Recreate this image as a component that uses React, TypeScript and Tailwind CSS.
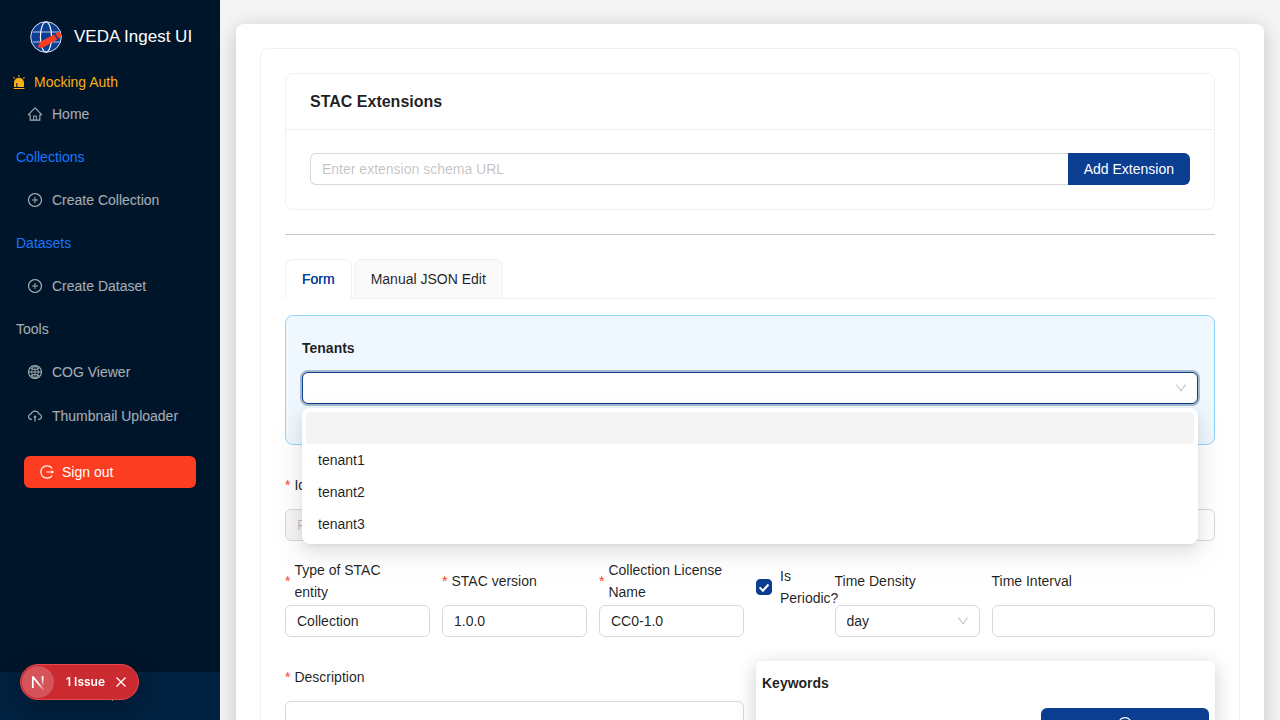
import type { ReactNode } from 'react';
import type { IconType } from 'react-icons';
import {
  AiFillAlert,
  AiOutlineCloudUpload,
  AiOutlineDown,
  AiOutlineGlobal,
  AiOutlineHome,
  AiOutlineLeft,
  AiOutlineLogout,
  AiOutlinePlusCircle,
} from 'react-icons/ai';

const inputClass =
  'block h-8 w-full min-w-0 rounded-md border border-[#d9d9d9] bg-white px-[11px] text-sm text-black/88 outline-none placeholder:text-black/25 disabled:bg-[#f5f5f5]';

// Trims the empty margin that the icon set leaves round each glyph.
function Icon({ as: Glyph, className = 'size-3.5 shrink-0' }: { as: IconType; className?: string }) {
  return <Glyph viewBox="64 64 896 896" className={className} aria-hidden="true" />;
}

function SelectArrow() {
  return <Icon as={AiOutlineDown} className="pointer-events-none absolute top-2.5 right-[11px] size-3 text-black/25" />;
}

function Logo() {
  return (
    <svg className="size-8 shrink-0" viewBox="0 0 32 32" fill="none" aria-hidden="true">
      <circle cx="16" cy="16" r="15.3" fill="#0b3d91" />
      <g stroke="#b9c8e2" strokeWidth="1.2">
        <path d="M2.5 11h27M2.5 21h27" />
        <ellipse cx="16" cy="16" rx="5.6" ry="15" stroke="#fff" />
      </g>
      <circle cx="16" cy="16" r="15.3" stroke="#dde5f2" strokeWidth="1" />
      <g fill="#fc3d21">
        <path d="M8 25.2 10.4 20.8 24.2 13.2 27.2 18.4 13.2 26.4 8.6 26.8Z" />
        <path d="M25.4 12.4 29 10.8 29.9 11.2 31.6 14.6 31.3 15.6 28.4 17.6Z" />
      </g>
    </svg>
  );
}

function MenuLink({ icon, children }: { icon: IconType; children: ReactNode }) {
  return (
    <li className="mx-1 mb-1">
      <a href="#" className="flex h-10 items-center gap-2.5 rounded-lg px-6 text-white/65">
        <Icon as={icon} />
        {children}
      </a>
    </li>
  );
}

function MenuGroup({ title, blue, children }: { title: string; blue?: boolean; children: ReactNode }) {
  return (
    <li>
      <div className={`mb-1 px-4 py-2 leading-[22px] ${blue ? 'text-[#1677ff]' : 'text-white/65'}`}>{title}</div>
      <ul>{children}</ul>
    </li>
  );
}

function Sidebar() {
  return (
    <aside className="flex w-[220px] shrink-0 flex-col bg-[#001529]">
      <div className="flex items-center gap-3 pt-[21px] pl-[30px] text-[17px] leading-6 whitespace-nowrap text-white">
        <Logo />
        <span>VEDA Ingest UI</span>
      </div>
      <div className="mt-[18px] flex items-center gap-2 px-3 leading-[22px] text-[#faad14]">
        <Icon as={AiFillAlert} />
        Mocking Auth
      </div>
      <nav aria-label="Main">
        <ul className="mt-px">
          <MenuLink icon={AiOutlineHome}>Home</MenuLink>
          <MenuGroup title="Collections" blue>
            <MenuLink icon={AiOutlinePlusCircle}>Create Collection</MenuLink>
          </MenuGroup>
          <MenuGroup title="Datasets" blue>
            <MenuLink icon={AiOutlinePlusCircle}>Create Dataset</MenuLink>
          </MenuGroup>
          <MenuGroup title="Tools">
            <MenuLink icon={AiOutlineGlobal}>COG Viewer</MenuLink>
            <MenuLink icon={AiOutlineCloudUpload}>Thumbnail Uploader</MenuLink>
          </MenuGroup>
        </ul>
      </nav>
      <div className="px-6 pt-4">
        <button type="button" className="flex h-8 w-full items-center gap-2 rounded-md bg-[#fc3d21] px-4 text-white">
          <Icon as={AiOutlineLogout} />
          Sign out
        </button>
      </div>
      <button
        type="button"
        aria-label="Collapse sidebar"
        className="mt-auto flex h-12 items-center justify-center bg-[#002140] text-white"
      >
        <Icon as={AiOutlineLeft} className="size-3" />
      </button>
    </aside>
  );
}

function IssueBadge() {
  return (
    <div className="fixed bottom-5 left-5 flex h-9 items-center rounded-full border border-[#e5484d] bg-[#ca2a30] px-px font-['Inter',sans-serif] text-xs font-semibold text-white shadow-[0_8px_24px_rgba(0,0,0,0.25)]">
      <button type="button" aria-label="Open developer tools" className="size-8 rounded-full bg-white/20">
        <svg viewBox="0 0 32 32" fill="none" className="size-8" strokeWidth="1.7">
          <defs>
            <linearGradient id="stem" x1="0" y1="10" x2="0" y2="20" gradientUnits="userSpaceOnUse">
              <stop offset="0.3" stopColor="#fff" />
              <stop offset="1" stopColor="#fff" stopOpacity="0" />
            </linearGradient>
            <linearGradient id="diagonal" x1="17" y1="17" x2="22" y2="24" gradientUnits="userSpaceOnUse">
              <stop stopColor="#fff" />
              <stop offset="1" stopColor="#fff" stopOpacity="0.1" />
            </linearGradient>
          </defs>
          <path d="M10.8 22V10.6L21.6 24" stroke="url(#diagonal)" strokeLinejoin="bevel" />
          <path d="M20.6 10v10" stroke="url(#stem)" />
        </svg>
      </button>
      <button type="button" className="pr-2 pl-3">
        1 Issue
      </button>
      <button type="button" aria-label="Dismiss" className="mr-2 flex size-4 items-center justify-center">
        <svg viewBox="0 0 14 14" className="size-3.5" stroke="#fff" strokeWidth="1.3">
          <path d="m2.5 2.5 9 9m0-9-9 9" />
        </svg>
      </button>
    </div>
  );
}

function Field({
  id,
  label,
  required,
  span,
  children,
}: {
  id: string;
  label: string;
  required?: boolean;
  span: string;
  children: ReactNode;
}) {
  return (
    <div className={span}>
      <label htmlFor={id} className="mb-2 flex h-8 items-center gap-1 pr-3.5 leading-[22px]">
        {required && <span className="text-[#fc3d21]">*</span>}
        <span>{label}</span>
      </label>
      {children}
    </div>
  );
}

function Extensions() {
  return (
    <section className="rounded-lg border border-[#f0f0f0]">
      <h2 className="-mb-px flex h-14 items-center border-b border-[#f0f0f0] px-6 text-base font-bold">
        STAC Extensions
      </h2>
      <div className="flex p-6">
        <input
          aria-label="Extension schema URL"
          placeholder="Enter extension schema URL"
          className="h-8 min-w-0 flex-1 rounded-l-md border border-r-0 border-[#d9d9d9] px-[11px] outline-none placeholder:text-black/25"
        />
        <button type="button" className="h-8 rounded-r-md bg-[#0b3d91] px-4 text-white">
          Add Extension
        </button>
      </div>
    </section>
  );
}

function Tenants() {
  return (
    <section className="rounded-lg border border-[#91d5ff] bg-[#f0f8ff] px-4 pt-4 pb-10">
      <label htmlFor="tenants" className="mb-2 flex h-8 items-center font-bold">
        Tenants
      </label>
      <div className="relative z-10">
        <select
          id="tenants"
          className="block h-8 w-full appearance-none rounded-md border border-[#0b3d91] bg-white px-[11px] shadow-[0_0_0_2px_rgba(0,44,89,0.3)] outline-none"
        >
          <option value=""></option>
        </select>
        <SelectArrow />
        <ul
          role="listbox"
          aria-label="Tenants"
          className="absolute inset-x-0 top-full mt-1 rounded-lg bg-white p-1 leading-[22px] shadow-[0_6px_16px_0_rgba(0,0,0,0.08),0_3px_6px_-4px_rgba(0,0,0,0.12),0_9px_28px_8px_rgba(0,0,0,0.05)]"
        >
          <li role="option" aria-selected="false" className="h-8 rounded bg-[#f4f4f4]"></li>
          {['tenant1', 'tenant2', 'tenant3'].map((tenant) => (
            <li key={tenant} role="option" aria-selected="false" className="rounded px-3 py-[5px]">
              {tenant}
            </li>
          ))}
        </ul>
      </div>
    </section>
  );
}

export default function App() {
  return (
    <div className="flex h-screen overflow-hidden bg-[#f4f4f4] font-['Liberation_Sans',Arial,sans-serif] text-sm text-black/88">
      <Sidebar />
      <main className="min-w-0 flex-1 overflow-y-auto px-4 py-6 [scrollbar-width:none]">
        <div className="rounded-lg bg-white p-6 shadow-[0_4px_20px_rgba(0,0,0,0.2)]">
          <div className="rounded-lg border border-[#f0f0f0] p-6">
            <Extensions />
            <hr className="my-6 border-[#c6c6c6]" />
            <div role="tablist" className="mb-4 flex gap-0.5 border-b border-[#f0f0f0]">
              <button
                type="button"
                role="tab"
                aria-selected="true"
                className="-mb-px rounded-t-lg border border-[#f0f0f0] border-b-white bg-white px-4 py-2 leading-[22px] text-[#0b3d91] [text-shadow:0_0_0.25px_currentcolor]"
              >
                Form
              </button>
              <button
                type="button"
                role="tab"
                aria-selected="false"
                className="-mb-px rounded-t-lg border border-[#f0f0f0] bg-[#fafafa] px-4 py-2 leading-[22px]"
              >
                Manual JSON Edit
              </button>
            </div>
            <form className="flex flex-col gap-6">
              <Tenants />
              <div className="grid grid-cols-12 gap-x-3">
                <Field id="identifier" label="Identifier" required span="col-span-6">
                  <input id="identifier" disabled className={inputClass} placeholder="P" />
                </Field>
                <Field id="title" label="Title" span="col-span-6">
                  <input id="title" className={inputClass} />
                </Field>
              </div>
              <div className="grid grid-cols-12 gap-x-3">
                <Field id="type" label="Type of STAC entity" required span="col-span-2">
                  <input id="type" defaultValue="Collection" className={inputClass} />
                </Field>
                <Field id="version" label="STAC version" required span="col-span-2">
                  <input id="version" defaultValue="1.0.0" className={inputClass} />
                </Field>
                <Field id="license" label="Collection License Name" required span="col-span-2">
                  <input id="license" defaultValue="CC0-1.0" className={inputClass} />
                </Field>
                <label className="flex items-center gap-2 self-start leading-[22px]">
                  <span className="relative flex size-4 shrink-0">
                    <input
                      type="checkbox"
                      defaultChecked
                      className="peer size-4 appearance-none rounded border border-[#d9d9d9] checked:border-[#0b3d91] checked:bg-[#0b3d91]"
                    />
                    <svg
                      viewBox="0 0 16 16"
                      fill="none"
                      stroke="#fff"
                      strokeWidth="2"
                      className="pointer-events-none absolute inset-0 hidden size-4 peer-checked:block"
                    >
                      <path d="m3.6 8.4 3.3 3.3 5.6-6.2" />
                    </svg>
                  </span>
                  <span className="min-w-0">Is Periodic?</span>
                </label>
                <Field id="density" label="Time Density" span="col-span-2">
                  <div className="relative">
                    <select id="density" defaultValue="day" className={`${inputClass} appearance-none`}>
                      <option value="day">day</option>
                      <option value="month">month</option>
                      <option value="year">year</option>
                    </select>
                    <SelectArrow />
                  </div>
                </Field>
                <Field id="interval" label="Time Interval" span="col-span-3">
                  <input id="interval" className={inputClass} />
                </Field>
              </div>
              <div className="grid grid-cols-12 gap-x-3">
                <Field id="description" label="Description" required span="col-span-6">
                  <textarea
                    id="description"
                    rows={4}
                    className="block w-full resize-none rounded-md border border-[#d9d9d9] px-[11px] py-1 outline-none"
                  />
                </Field>
                <fieldset className="col-span-6 rounded-md bg-white p-1.5 shadow-[0_4px_20px_rgba(0,0,0,0.2)]">
                  <h3 className="mt-[5px] mb-3.5 leading-[22px] font-bold">Keywords</h3>
                  <button
                    type="button"
                    aria-label="Add keyword"
                    className="ml-auto flex h-8 w-[168px] items-center justify-center rounded-md bg-[#0b3d91] text-white"
                  >
                    <Icon as={AiOutlinePlusCircle} />
                  </button>
                </fieldset>
              </div>
            </form>
          </div>
        </div>
      </main>
      <IssueBadge />
    </div>
  );
}
